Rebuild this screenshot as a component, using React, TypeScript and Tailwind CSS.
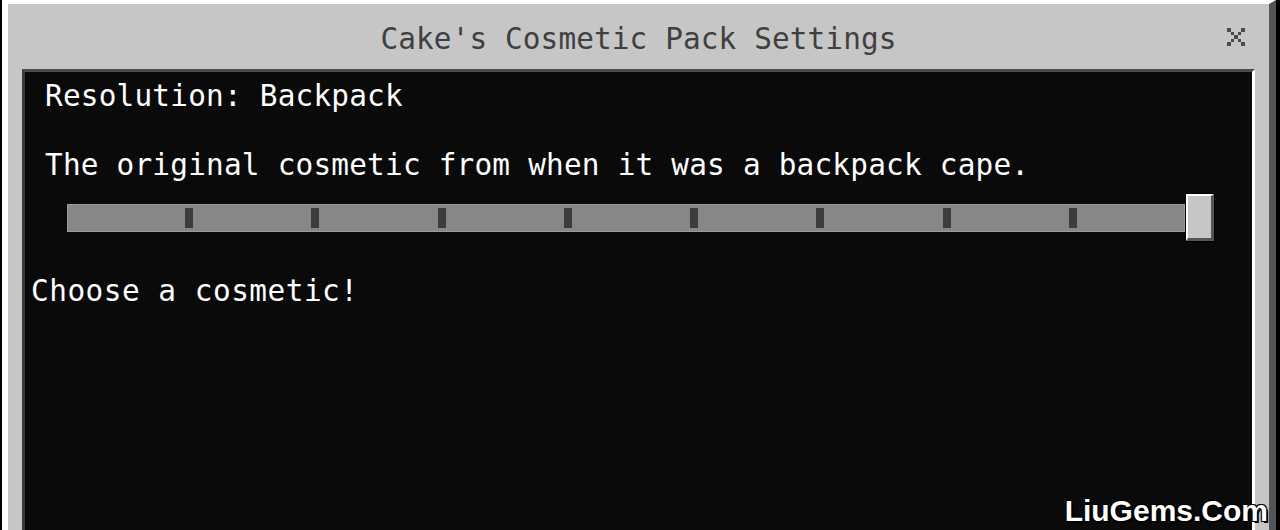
const mono = "font-['DejaVu_Sans_Mono','Liberation_Mono',monospace]";

function CloseIcon() {
    const cells = [
        [0, 0], [4, 0], [1, 1], [3, 1], [2, 2], [1, 3], [3, 3], [0, 4], [4, 4],
    ];
    return (
        <svg width="18" height="18" viewBox="0 0 5 5" shapeRendering="crispEdges">
            {cells.map(([x, y]) => (
                <rect key={`${x}-${y}`} x={x} y={y} width="1" height="1" fill="#4a4a4a" />
            ))}
        </svg>
    );
}

function Slider() {
    const ticks = [0, 1, 2, 3, 4, 5, 6, 7];
    return (
        <div className="flex items-center ml-[42px] mr-[37px] h-[49px]">
            <div className="flex-1 h-[28px] bg-[#878787] border border-[#9a9a9a] flex items-center justify-between pl-[117px] pr-[107px]">
                {ticks.map((t) => (
                    <div key={t} className="w-[8px] h-[20px] bg-[#3c3c3c]" />
                ))}
            </div>
            <div className="w-[30px] h-[49px] bg-black p-[1px]">
                <div className="w-full h-full border-t-2 border-l-2 border-t-white border-l-white border-b-[3px] border-r-[3px] border-b-[#555] border-r-[#555] bg-[#c6c6c6]" />
            </div>
        </div>
    );
}

export default function App() {
    return (
        <div className="relative w-[1280px] h-[530px] bg-black overflow-hidden pl-[2px]">
            <div className="w-[1274px] h-[560px] flex flex-col bg-[#c6c6c6] border-t-4 border-l-[6px] border-t-white border-l-white border-r-[7px] border-r-[#555]">
                {/* title bar */}
                <div className="relative h-[65px] flex items-center justify-center">
                    <span className={`${mono} text-[29.4px] leading-none text-[#3f3f3f] mt-[6px] tracking-[0.1px]`}>
                        Cake's Cosmetic Pack Settings
                    </span>
                    <div className="absolute right-[24px] top-[24px]">
                        <CloseIcon />
                    </div>
                </div>

                {/* content */}
                <div className={`flex-1 mx-[14px] bg-[#0a0a0a] border-t-[3px] border-l-[3px] border-r-[3px] border-t-[#4d4d4d] border-l-[#3a3a3a] border-r-white text-white ${mono} text-[29.4px] tracking-[0.2px]`}>
                    <div className="leading-[30px] mt-[9px] pl-[20px]">Resolution: Backpack</div>
                    <div className="leading-[30px] mt-[39px] pl-[20px]">
                        The original cosmetic from when it was a backpack cape.
                    </div>
                    <div className="mt-[13px]">
                        <Slider />
                    </div>
                    <div className="leading-[30px] mt-[34px] pl-[6px] tracking-[0.5px]">Choose a cosmetic!</div>
                </div>
            </div>

            <div className="absolute right-[12px] bottom-[4px] font-['Liberation_Sans',Arial,sans-serif] font-bold text-[30px] leading-none text-white [text-shadow:2px_2px_0_#000,-1px_-1px_0_#000,1px_-1px_0_#000,-1px_1px_0_#000]">
                LiuGems.Com
            </div>
        </div>
    );
}
